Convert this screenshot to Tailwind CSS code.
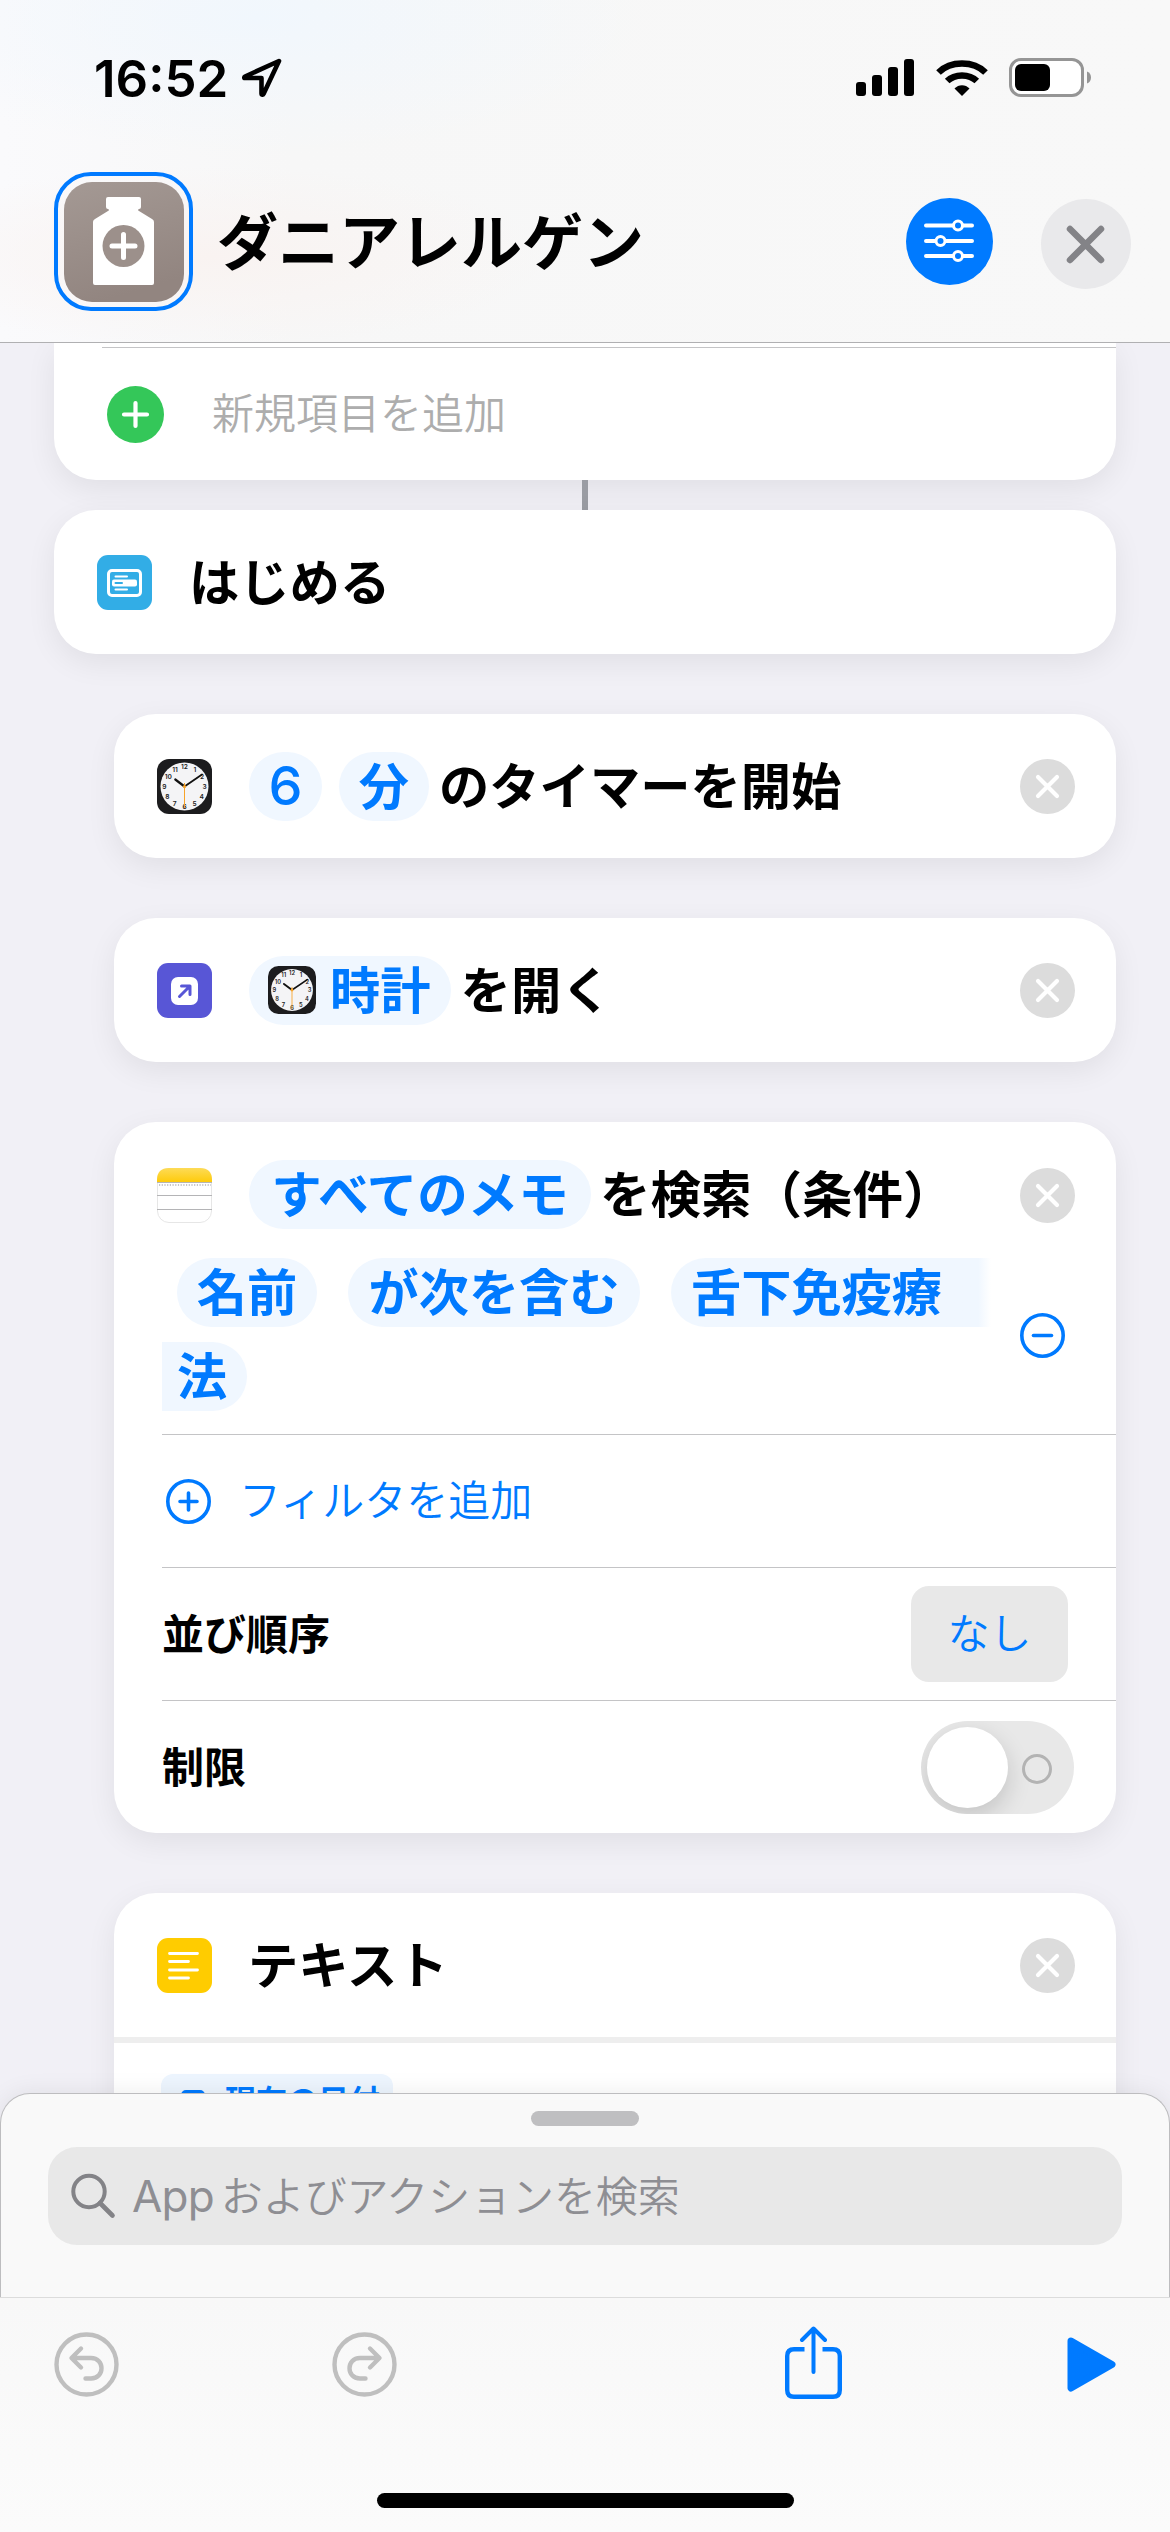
<!DOCTYPE html>
<html lang="ja">
<head>
    <meta charset="UTF-8">
    <meta name="viewport" content="width=device-width, initial-scale=1.0">
    <title>ダニアレルゲン</title>
    <script src="https://cdn.jsdelivr.net/npm/@tailwindcss/browser@4"></script>
</head>
<body class="w-[1170px] h-[2532px] overflow-hidden bg-[#f1f0f6] text-black leading-none font-['Inter','Noto_Sans_CJK_JP',sans-serif]">
    <!-- Shared icons -->
    <svg class="hidden">
        <symbol id="clock" viewBox="0 0 55 55">
            <rect width="55" height="55" rx="12" fill="#1c1c1e"/>
            <circle cx="27.5" cy="27.5" r="24" fill="#f4f4f6"/>
            <g font-family="Inter" font-size="6.6" font-weight="600" fill="#222" text-anchor="middle">
                <text x="27.5" y="10.4">12</text>
                <text x="37.8" y="13">1</text>
                <text x="45" y="20.4">2</text>
                <text x="47.6" y="29.8">3</text>
                <text x="44.6" y="40">4</text>
                <text x="37.6" y="47.2">5</text>
                <text x="27.5" y="50">6</text>
                <text x="17.6" y="47.2">7</text>
                <text x="10.4" y="40">8</text>
                <text x="7.4" y="29.8">9</text>
                <text x="11.4" y="20.4">10</text>
                <text x="18" y="13">11</text>
            </g>
            <path d="M27.5 27.5 18.3 20.5" stroke="#111" stroke-width="2.2" stroke-linecap="round"/>
            <path d="M27.5 27.5 45 15.5" stroke="#111" stroke-width="1.8" stroke-linecap="round"/>
            <path d="M27.5 24V49" stroke="#f7a329" stroke-width="1"/>
            <circle cx="27.5" cy="27.5" r="1.6" fill="#f7a329"/>
        </symbol>
        <symbol id="remove" viewBox="0 0 55 55">
            <circle cx="27.5" cy="27.5" r="27.5" fill="#dcdcdc"/>
            <path d="M18 18 37 37M37 18 18 37" stroke="#fff" stroke-width="4.2" stroke-linecap="round"/>
        </symbol>
    </svg>

    <div class="flex flex-col h-[2532px]">
        <!-- Header -->
        <header class="relative z-10 h-[343px] shrink-0 border-b border-[#b0b0b2] bg-[#f7f7f7] bg-[radial-gradient(ellipse_at_22%_5%,#f1f7fd_0%,transparent_30%),radial-gradient(ellipse_at_18%_75%,#f9f3f1_0%,transparent_25%),linear-gradient(to_right,#fafafc,#f7f7f7_25%,#f8f8f8)]">
            <!-- Status bar -->
            <div class="flex items-center h-[156px] pl-[94px] pr-[79px]">
                <span class="text-[51px] font-semibold">16:52</span>
                <svg class="ml-[13px] w-[42px] h-[40px]" viewBox="0 0 42 40" fill="none">
                    <path d="M38 3 4 18.5C3 19 3 20 4 20H20.500V35.500C20.500 37 22 37 22.500 36Z" stroke="#000" stroke-width="4.600" stroke-linejoin="round"/>
                </svg>
                <svg class="ml-auto w-[236px] h-[40px]" viewBox="0 0 236 40">
                    <rect x="1" y="24" width="10" height="14" rx="3"/>
                    <rect x="17" y="17" width="10" height="21" rx="3"/>
                    <rect x="33" y="9" width="10" height="29" rx="3"/>
                    <rect x="49" y="1" width="10" height="37" rx="3"/>
                    <path d="M83.500 14.500C95.500 2.500 118.500 2.500 130.500 14.500" fill="none" stroke="#000" stroke-width="6.500"/>
                    <path d="M92.200 23C99.700 15.500 114.300 15.500 121.800 23" fill="none" stroke="#000" stroke-width="6.500"/>
                    <path d="M99.500 30.500C103.500 26 110.500 26 114.500 30.500L107 38Z"/>
                    <rect x="155.500" y="1.500" width="72" height="36" rx="10.500" fill="#fff" stroke="#959595" stroke-width="3"/>
                    <rect x="160" y="6" width="35" height="27" rx="6"/>
                    <path d="M232 13.500C235 14.500 236 17 236 19.500S235 24.500 232 25.500Z" fill="#959595"/>
                </svg>
            </div>
            <!-- Title row -->
            <div class="flex items-center pl-[54px] pr-[39px] h-[171px]">
                <div class="w-[139px] h-[139px] rounded-[37px] border-4 border-[#007aff] flex items-center justify-center">
                    <svg class="w-[120px] h-[120px]" viewBox="0 0 120 120">
                        <defs>
                            <linearGradient id="taupe" x1="0" y1="0" x2="0.300" y2="1">
                                <stop offset="0" stop-color="#a49994"/>
                                <stop offset="1" stop-color="#928580"/>
                            </linearGradient>
                        </defs>
                        <rect width="120" height="120" rx="28" fill="url(#taupe)"/>
                        <path d="M44 15H75Q77 15 77 17V25Q77 27 75 27Q73 28 75 29L88 37Q90 38 90 40V101Q90 103 88 103H31Q29 103 29 101V40Q29 38 31 37L44 29Q46 28 44 27Q42 27 42 25V17Q42 15 44 15Z" fill="#fff"/>
                        <circle cx="59.500" cy="64" r="21" fill="#9c908b"/>
                        <path d="M48 64H71M59.500 52.500V75.500" stroke="#fff" stroke-width="5" stroke-linecap="round"/>
                    </svg>
                </div>
                <h1 class="ml-[24px] pt-[4px] text-[61px] font-bold">ダニアレルゲン</h1>
                <svg class="ml-auto w-[87px] h-[87px]" viewBox="0 0 87 87" fill="none" stroke="#fff">
                    <circle cx="43.500" cy="43.500" r="43.500" fill="#007aff" stroke="none"/>
                    <path d="M20 27.500H66M20 43H66M20 58H66" stroke-width="4" stroke-linecap="round"/>
                    <g fill="#007aff" stroke-width="3">
                        <circle cx="52" cy="27.500" r="4.500"/>
                        <circle cx="34.500" cy="43" r="4.500"/>
                        <circle cx="52" cy="58" r="4.500"/>
                    </g>
                </svg>
                <svg class="ml-[48px] mt-[5px] w-[90px] h-[90px]" viewBox="0 0 90 90">
                    <circle cx="45" cy="45" r="45" fill="#e9e9eb"/>
                    <path d="M29 30 60 61M60 30 29 61" stroke="#838387" stroke-width="6.500" stroke-linecap="round"/>
                </svg>
            </div>
        </header>

        <!-- Workflow editor -->
        <main class="h-[1784px] shrink-0 overflow-hidden pl-[54px] pr-[54px]">
            <!-- Menu card, scrolled under the header -->
            <section class="h-[137px] rounded-b-[42px] bg-white shadow-[0_9px_30px_rgba(0,0,0,0.07)]">
                <div class="pt-[4px] pl-[48px]"><div class="h-px bg-[#c4c4c6]"></div></div>
                <div class="flex items-center h-[132px] pl-[53px]">
                    <svg class="w-[57px] h-[57px]" viewBox="0 0 57 57">
                        <circle cx="28.500" cy="28.500" r="28.500" fill="#34c759"/>
                        <path d="M17 28.500H40M28.500 17V40" stroke="#fff" stroke-width="4.200" stroke-linecap="round"/>
                    </svg>
                    <span class="ml-[48px] text-[42px] font-[350] text-[#adadad]">新規項目を追加</span>
                </div>
            </section>
            <div class="mx-auto w-[6px] h-[30px] bg-[#9a9ca3]"></div>

            <section class="flex items-center h-[144px] pl-[43px] rounded-[42px] bg-white shadow-[0_9px_30px_rgba(0,0,0,0.07)]">
                <svg class="w-[55px] h-[55px]" viewBox="0 0 55 55">
                    <rect width="55" height="55" rx="11" fill="#32ade6"/>
                    <rect x="11.500" y="15.500" width="32" height="25" rx="3.500" fill="none" stroke="#fff" stroke-width="3"/>
                    <path d="M18.500 21.500H30M18.500 34.500H30" stroke="#fff" stroke-width="2" stroke-linecap="round"/>
                    <rect x="15" y="24.500" width="25" height="7" rx="2" fill="#fff"/>
                    <path d="M18.500 28H25" stroke="#32ade6" stroke-width="2" stroke-linecap="round"/>
                </svg>
                <h2 class="ml-[37px] pt-[3px] text-[50.3px] font-bold">はじめる</h2>
            </section>

            <!-- Actions inside the menu case -->
            <div class="flex flex-col gap-[60px] pt-[60px] pl-[60px]">
                <section class="flex items-center h-[144px] pl-[43px] pr-[41px] rounded-[42px] bg-white shadow-[0_9px_30px_rgba(0,0,0,0.07)] text-[50.3px] font-bold">
                    <svg class="w-[55px] h-[55px]"><use href="#clock"/></svg>
                    <span class="ml-[37px] w-[73px] h-[69px] flex items-center justify-center rounded-full bg-[#f0f7ff] text-[#007aff] text-[54px] font-medium">6</span>
                    <span class="ml-[17px] w-[90px] h-[69px] pt-[2px] flex items-center justify-center rounded-full bg-[#f0f7ff] text-[#007aff]">分</span>
                    <span class="ml-[10px] pt-[3px]">のタイマーを開始</span>
                    <svg class="ml-auto w-[55px] h-[55px]"><use href="#remove"/></svg>
                </section>

                <section class="flex items-center h-[144px] pl-[43px] pr-[41px] rounded-[42px] bg-white shadow-[0_9px_30px_rgba(0,0,0,0.07)] text-[50.3px] font-bold">
                    <svg class="w-[55px] h-[55px]" viewBox="0 0 55 55">
                        <rect width="55" height="55" rx="11" fill="#5856d6"/>
                        <rect x="14" y="14" width="27" height="28" rx="7" fill="#fff"/>
                        <path d="M22.500 33.500 32.500 23.500M24.500 23H33V31.500" fill="none" stroke="#5856d6" stroke-width="3" stroke-linecap="round" stroke-linejoin="round"/>
                    </svg>
                    <span class="ml-[37px] h-[69px] flex items-center gap-[14px] pl-[19px] pr-[20px] rounded-full bg-[#f0f7ff] text-[#007aff]">
                        <svg class="w-[48px] h-[48px]"><use href="#clock"/></svg>
                        <span class="pt-[2px]">時計</span>
                    </span>
                    <span class="ml-[10px] pt-[3px]">を開く</span>
                    <svg class="ml-auto w-[55px] h-[55px]"><use href="#remove"/></svg>
                </section>

                <section class="h-[711px] rounded-[42px] bg-white shadow-[0_9px_30px_rgba(0,0,0,0.07)]">
                    <div class="flex items-center h-[136px] pt-[10px] pl-[43px] pr-[41px] text-[50.5px] font-bold">
                        <svg class="w-[55px] h-[55px]" viewBox="0 0 55 55">
                            <defs>
                                <linearGradient id="noteTop" x1="0" y1="0" x2="0" y2="1">
                                    <stop offset="0" stop-color="#fddb57"/>
                                    <stop offset="1" stop-color="#fecb0b"/>
                                </linearGradient>
                            </defs>
                            <rect x="0.500" y="0.500" width="54" height="54" rx="11.500" fill="#fff" stroke="#e6e6e6"/>
                            <path d="M0 14V12Q0 0 12 0H43Q55 0 55 12V14Z" fill="url(#noteTop)"/>
                            <path d="M0 14.500H55M0 27.500H55M0 41.500H55" stroke="#b4b4b6"/>
                            <path d="M2 17H54" stroke="#c6c6c8" stroke-width="2" stroke-dasharray="1.200 1.500"/>
                        </svg>
                        <span class="ml-[37px] mb-[2px] w-[342px] h-[69px] pt-[2px] shrink-0 flex items-center justify-center rounded-full bg-[#f0f7ff] text-[#007aff]">すべてのメモ</span>
                        <span class="ml-[9px] pt-[1px] whitespace-nowrap">を検索（条件）</span>
                        <svg class="ml-auto w-[55px] h-[55px] shrink-0"><use href="#remove"/></svg>
                    </div>
                    <!-- Filter condition -->
                    <div class="flex items-start h-[176px] pl-[48px] pr-[51px] text-[50.2px] font-bold text-[#007aff]">
                        <div class="flex flex-col gap-[15px] w-[829px]">
                            <div class="flex pl-[15px] gap-[31px]">
                                <span class="h-[69px] w-[140px] pt-[2px] shrink-0 flex items-center justify-center rounded-full bg-[#f0f7ff]">名前</span>
                                <span class="h-[69px] w-[292px] pt-[2px] shrink-0 flex items-center justify-center rounded-full bg-[#f0f7ff]">が次を含む</span>
                                <span class="h-[69px] flex-1 pt-[2px] flex items-center pl-[20px] rounded-l-full bg-linear-to-r from-[#f0f7ff] from-96% to-white">舌下免疫療</span>
                            </div>
                            <span class="h-[69px] w-[85px] pt-[2px] flex items-center pl-[15px] rounded-r-full bg-[#f0f7ff]">法</span>
                        </div>
                        <svg class="ml-auto mt-[55px] w-[45px] h-[45px]" viewBox="0 0 45 45" fill="none" stroke="#007aff" stroke-width="3.600">
                            <circle cx="22.500" cy="22.500" r="20.700"/>
                            <path d="M13.500 22.500H31.500" stroke-linecap="round"/>
                        </svg>
                    </div>
                    <!-- Parameters -->
                    <div class="pl-[48px] text-[42px]">
                        <div class="flex items-center h-[133px] pl-[4px] border-t border-[#c4c4c6] text-[#007aff] font-[350]">
                            <svg class="w-[45px] h-[45px]" viewBox="0 0 45 45" fill="none" stroke="#007aff" stroke-width="3.600">
                                <circle cx="22.500" cy="22.500" r="20.700"/>
                                <path d="M14 22.500H31M22.500 14V31" stroke-linecap="round"/>
                            </svg>
                            <span class="ml-[28px]">フィルタを追加</span>
                        </div>
                        <div class="flex items-center justify-between h-[133px] pr-[48px] border-t border-[#c4c4c6]">
                            <span class="font-bold pt-[1px]">並び順序</span>
                            <span class="w-[157px] h-[96px] flex items-center justify-center rounded-[18px] bg-[#e8e8e8] text-[#007aff] font-[350]">なし</span>
                        </div>
                        <div class="flex items-center justify-between h-[133px] pr-[42px] border-t border-[#c4c4c6]">
                            <span class="font-bold pt-[1px]">制限</span>
                            <span class="w-[153px] h-[93px] flex items-center justify-between pl-[6px] pr-[22px] rounded-full overflow-hidden bg-[#e8e8e8]">
                                <span class="w-[81px] h-[81px] rounded-full bg-white shadow-[0_9px_24px_rgba(0,0,0,0.16)]"></span>
                                <span class="w-[30px] h-[30px] mt-[3px] rounded-full border-3 border-[#b3b3b3]"></span>
                            </span>
                        </div>
                    </div>
                </section>

                <section class="h-[400px] rounded-[42px] bg-white shadow-[0_9px_30px_rgba(0,0,0,0.07)]">
                    <div class="flex items-center h-[150px] border-b-6 border-[#eeeeee] pl-[43px] pr-[41px]">
                        <svg class="w-[55px] h-[55px]" viewBox="0 0 55 55">
                            <rect width="55" height="55" rx="11" fill="#ffcc00"/>
                            <path d="M12.500 15.500H40.500M12.500 23.500H31.500M12.500 32H40.500M12.500 40H31.500" stroke="#fff" stroke-width="2.800" stroke-linecap="round"/>
                        </svg>
                        <h2 class="ml-[36px] pt-[3px] text-[50.3px] font-bold">テキスト</h2>
                        <svg class="ml-auto w-[55px] h-[55px]"><use href="#remove"/></svg>
                    </div>
                    <div class="pt-[31px] pl-[47px]">
                        <span class="w-[232px] h-[52px] flex items-center pl-[20px] rounded-[12px] bg-[#edf5fe] text-[#007aff] text-[31px] font-bold">
                            <svg class="w-[24px] h-[24px] mt-[4px] mr-[20px]" viewBox="0 0 24 24" fill="none" stroke="#007aff" stroke-width="4">
                                <rect x="2" y="2" width="20" height="20" rx="3"/>
                            </svg>現在の日付
                        </span>
                    </div>
                </section>
            </div>
        </main>

        <!-- Action search sheet -->
        <div class="relative -mt-[34px] h-[204px] shrink-0 rounded-t-[30px] border border-b-0 border-[#bdbdbf] bg-[#f9f9f9] shadow-[0_0_24px_rgba(0,0,0,0.08)] px-[47px] pt-[17px]">
            <div class="mx-auto w-[108px] h-[15px] rounded-full bg-[#bfbfc1]"></div>
            <div class="flex items-center mt-[21px] h-[98px] pl-[22px] rounded-[29px] bg-[#e8e8e8] text-[#8e8e93]">
                <svg class="w-[46px] h-[46px]" viewBox="0 0 46 46" fill="none" stroke="#838387" stroke-width="4">
                    <circle cx="19" cy="18.500" r="15.700"/>
                    <path d="M30 30 42.500 42.500" stroke-width="4.600" stroke-linecap="round"/>
                </svg>
                <span class="ml-[16px] text-[44px] tracking-[-0.8px]">App</span>
                <span class="ml-[7px] pt-[2px] text-[42px] font-[350] tracking-[-0.1px]">およびアクションを検索</span>
            </div>
        </div>

        <!-- Toolbar -->
        <footer class="relative flex-1 border-t border-[#dcdcdc] bg-[#fafafa] bg-linear-to-b from-[#f8f8f8] to-[#fbfbfb]">
            <div class="flex items-center pl-[54px] pr-[54px] h-[133px]">
                <svg class="w-[65px] h-[65px]" viewBox="0 0 65 65" fill="none" stroke="#bfbfbf" stroke-width="4.400" stroke-linecap="round" stroke-linejoin="round">
                    <circle cx="32.500" cy="32.500" r="30"/>
                    <path d="M27 16.500 17.500 26 27 35.500M18 26H37C51 26 51 46.500 37 46.500H31.500"/>
                </svg>
                <svg class="ml-[213px] w-[65px] h-[65px]" viewBox="0 0 65 65" fill="none" stroke="#bfbfbf" stroke-width="4.400" stroke-linecap="round" stroke-linejoin="round">
                    <circle cx="32.500" cy="32.500" r="30"/>
                    <path d="M38 16.500 47.500 26 38 35.500M47 26H28C14 26 14 46.500 28 46.500H33.500"/>
                </svg>
                <svg class="ml-[388px] mb-[5px] w-[57px] h-[73px]" viewBox="0 0 57 73" fill="none" stroke="#007aff" stroke-width="4.400">
                    <path d="M19.500 23.200H9Q2.200 23.200 2.200 30V64Q2.200 70.800 9 70.800H48Q54.800 70.800 54.800 64V30Q54.800 23.200 48 23.200H37.500"/>
                    <path d="M28.500 3V46M17 14 28.500 2.500 40 14" stroke-width="4" stroke-linecap="round" stroke-linejoin="round"/>
                </svg>
                <svg class="ml-auto w-[49px] h-[55px]" viewBox="0 0 49 55">
                    <path d="M4 4 45 27.500 4 51Z" fill="#007aff" stroke="#007aff" stroke-width="7" stroke-linejoin="round"/>
                </svg>
            </div>
            <div class="mx-auto mt-[62px] w-[417px] h-[15px] rounded-full bg-black"></div>
        </footer>
    </div>
</body>
</html>
